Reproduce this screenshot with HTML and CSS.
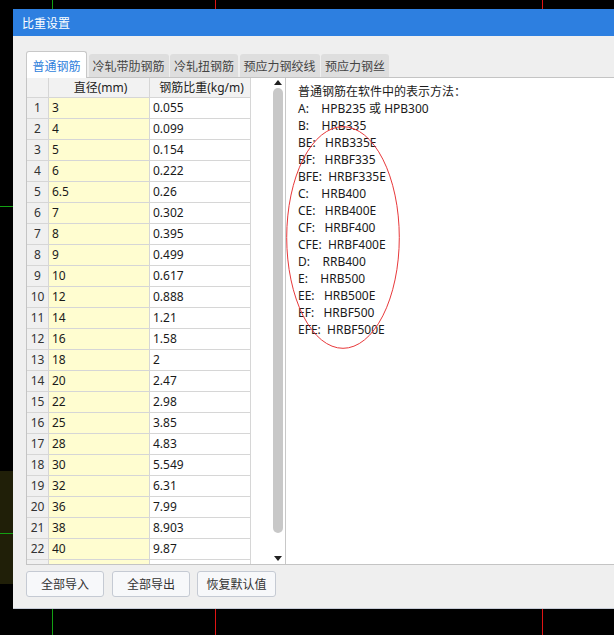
FILE: index.html
```html
<!DOCTYPE html>
<html lang="zh-CN">
<head>
<meta charset="utf-8">
<title>比重设置</title>
<link rel="stylesheet" href="styles.css">
</head>
<body>
<div class="desk">
  <div class="olive"></div>
  <div class="vline green v1"></div>
  <div class="vline red v2"></div>
  <div class="vline red v3"></div>
  <div class="hline green h1"></div>
  <div class="hline green h2"></div>

  <div class="dialog">
    <div class="titlebar">比重设置</div>
    <div class="dlg-body">
      <div class="tabs">
        <div class="tab active">普通钢筋</div>
        <div class="tab">冷轧带肋钢筋</div>
        <div class="tab">冷轧扭钢筋</div>
        <div class="tab">预应力钢绞线</div>
        <div class="tab">预应力钢丝</div>
      </div>
      <div class="panel">
        <div class="left">
          <div class="grid">
            <div class="row head"><div class="c rh"></div><div class="c c1">直径(mm)</div><div class="c c2">钢筋比重(kg/m)</div></div>
            <div class="row"><div class="c rh">1</div><div class="c c1">3</div><div class="c c2">0.055</div></div>
            <div class="row"><div class="c rh">2</div><div class="c c1">4</div><div class="c c2">0.099</div></div>
            <div class="row"><div class="c rh">3</div><div class="c c1">5</div><div class="c c2">0.154</div></div>
            <div class="row"><div class="c rh">4</div><div class="c c1">6</div><div class="c c2">0.222</div></div>
            <div class="row"><div class="c rh">5</div><div class="c c1">6.5</div><div class="c c2">0.26</div></div>
            <div class="row"><div class="c rh">6</div><div class="c c1">7</div><div class="c c2">0.302</div></div>
            <div class="row"><div class="c rh">7</div><div class="c c1">8</div><div class="c c2">0.395</div></div>
            <div class="row"><div class="c rh">8</div><div class="c c1">9</div><div class="c c2">0.499</div></div>
            <div class="row"><div class="c rh">9</div><div class="c c1">10</div><div class="c c2">0.617</div></div>
            <div class="row"><div class="c rh">10</div><div class="c c1">12</div><div class="c c2">0.888</div></div>
            <div class="row"><div class="c rh">11</div><div class="c c1">14</div><div class="c c2">1.21</div></div>
            <div class="row"><div class="c rh">12</div><div class="c c1">16</div><div class="c c2">1.58</div></div>
            <div class="row"><div class="c rh">13</div><div class="c c1">18</div><div class="c c2">2</div></div>
            <div class="row"><div class="c rh">14</div><div class="c c1">20</div><div class="c c2">2.47</div></div>
            <div class="row"><div class="c rh">15</div><div class="c c1">22</div><div class="c c2">2.98</div></div>
            <div class="row"><div class="c rh">16</div><div class="c c1">25</div><div class="c c2">3.85</div></div>
            <div class="row"><div class="c rh">17</div><div class="c c1">28</div><div class="c c2">4.83</div></div>
            <div class="row"><div class="c rh">18</div><div class="c c1">30</div><div class="c c2">5.549</div></div>
            <div class="row"><div class="c rh">19</div><div class="c c1">32</div><div class="c c2">6.31</div></div>
            <div class="row"><div class="c rh">20</div><div class="c c1">36</div><div class="c c2">7.99</div></div>
            <div class="row"><div class="c rh">21</div><div class="c c1">38</div><div class="c c2">8.903</div></div>
            <div class="row"><div class="c rh">22</div><div class="c c1">40</div><div class="c c2">9.87</div></div>
            <div class="row"><div class="c rh"></div><div class="c c1"></div><div class="c c2"></div></div>
          </div>
          <div class="vscroll">
            <svg class="arrow" width="8" height="5" viewBox="0 0 8 5"><polygon points="0,5 8,5 4,0" fill="#222"/></svg>
            <div class="thumb"></div>
            <svg class="arrow" width="8" height="5" viewBox="0 0 8 5"><polygon points="0,0 8,0 4,5" fill="#222"/></svg>
          </div>
        </div>
        <div class="notes">
<div class="ln">普通钢筋在软件中的表示方法：</div>
<div class="ln">A:    HPB235 或 HPB300</div>
<div class="ln">B:    HRB335</div>
<div class="ln">BE:   HRB335E</div>
<div class="ln">BF:   HRBF335</div>
<div class="ln">BFE:  HRBF335E</div>
<div class="ln">C:    HRB400</div>
<div class="ln">CE:   HRB400E</div>
<div class="ln">CF:   HRBF400</div>
<div class="ln">CFE:  HRBF400E</div>
<div class="ln">D:    RRB400</div>
<div class="ln">E:    HRB500</div>
<div class="ln">EE:   HRB500E</div>
<div class="ln">EF:   HRBF500</div>
<div class="ln">EFE:  HRBF500E</div>
          <svg class="mark" width="130" height="240" viewBox="0 0 130 240"><ellipse cx="57" cy="159.5" rx="56.3" ry="110.8" fill="none" stroke="#e8383a" stroke-width="1"/></svg>
        </div>
      </div>
      <div class="buttons">
        <div class="btn">全部导入</div>
        <div class="btn">全部导出</div>
        <div class="btn wide">恢复默认值</div>
      </div>
    </div>
  </div>
</div>
</body>
</html>
```

FILE: styles.css
```css
* { box-sizing: border-box; }
html, body { margin: 0; padding: 0; }
body {
  background: #000;
  width: 614px;
  height: 635px;
  overflow: hidden;
  font-family: "Noto Sans", "Noto Sans CJK SC", sans-serif;
  font-size: 12px;
  color: #1a1a1a;
}
.desk { position: relative; width: 614px; height: 635px; overflow: hidden; }

.olive { position: absolute; left: 0; top: 471px; width: 20px; height: 113px; background: #201f08; }
.vline { position: absolute; top: 0; width: 1px; height: 635px; }
.hline { position: absolute; left: 0; height: 1px; width: 20px; }
.green { background: #13a013; }
.red { background: #e01414; }
.v1 { left: 52px; }
.v2 { left: 215px; }
.v3 { left: 542px; }
.h1 { top: 206px; }
.h2 { top: 533px; }

.dialog {
  position: absolute;
  left: 13px;
  top: 9px;
  width: 620px;
  height: 600px;
  display: flex;
  flex-direction: column;
  background: #efefef;
  border-bottom: 1px solid #c6cbd6;
}
.titlebar {
  height: 27px;
  flex: none;
  background: #2d7fe0;
  color: #fff;
  font-family: "Noto Sans CJK SC", sans-serif;
  font-size: 12px;
  line-height: 27px;
  padding-left: 9px;
}
.dlg-body {
  flex: 1;
  padding: 15px 0 0 13px;
  display: flex;
  flex-direction: column;
}
.tabs {
  display: flex;
  align-items: flex-end;
  gap: 1.5px;
  height: 26px;
  flex: none;
}
.tab {
  height: 23px;
  line-height: 23px;
  padding: 0 4px;
  background: #dedede;
  color: #444;
  font-family: "Noto Sans CJK SC", sans-serif;
  border-radius: 3px 3px 0 0;
  white-space: nowrap;
}
.tab.active {
  height: 27px;
  line-height: 27px;
  padding: 0 5.5px;
  background: #fff;
  color: #2f7fdc;
  border: 1px solid #c8c8c8;
  border-bottom: none;
  position: relative;
  z-index: 1;
  margin-bottom: -1px;
}
.panel {
  flex: none;
  height: 488px;
  background: #fff;
  border: 1px solid #c4c4c4;
  border-right: none;
  display: flex;
}
.left {
  width: 259px;
  flex: none;
  border-right: 1px solid #c8c8c8;
  display: flex;
  overflow: hidden;
}
.grid {
  width: 224px;
  flex: none;
  overflow: hidden;
}
.row {
  display: grid;
  grid-template-columns: 22px 101px 101px;
  height: 21px;
}
.row.head { height: 20px; }
.c {
  border-right: 1px solid #d6d6d6;
  border-bottom: 1px solid #d6d6d6;
  line-height: 20px;
  white-space: nowrap;
  overflow: hidden;
}
.row.head .c { line-height: 19px; background: #f2f2f2; text-align: center; color: #222; }
.rh { background: #f0f0f0; text-align: center; color: #333; }
.c1 { background: #fffdd0; padding-left: 3px; }
.c2 { background: #fff; padding-left: 3px; }
.vscroll {
  margin-left: auto;
  width: 14px;
  display: flex;
  flex-direction: column;
  align-items: center;
  padding-top: 2px;
}
.arrow { flex: none; display: block; }
.thumb {
  width: 10px;
  height: 445px;
  margin: 3px 0 23px;
  background: #c8c8c8;
  border-radius: 5px;
}
.notes {
  position: relative;
  flex: 1;
  padding: 5px 0 0 12px;
  font-family: "Noto Sans", "Noto Sans CJK SC", sans-serif;
  font-size: 12px;
  color: #1a1a1a;
}
.ln { white-space: pre; line-height: 17px; height: 17px; }
.mark { position: absolute; left: 0; top: 0; overflow: visible; pointer-events: none; }

.buttons {
  display: flex;
  gap: 8px;
  margin-top: 6px;
}
.btn {
  width: 78px;
  height: 26px;
  line-height: 24px;
  text-align: center;
  border: 1px solid #c5cad3;
  border-radius: 3px;
  background: #f7f8fa;
  color: #333;
  font-family: "Noto Sans CJK SC", sans-serif;
}
.btn.wide { width: 79px; margin-left: -1px; }
```
